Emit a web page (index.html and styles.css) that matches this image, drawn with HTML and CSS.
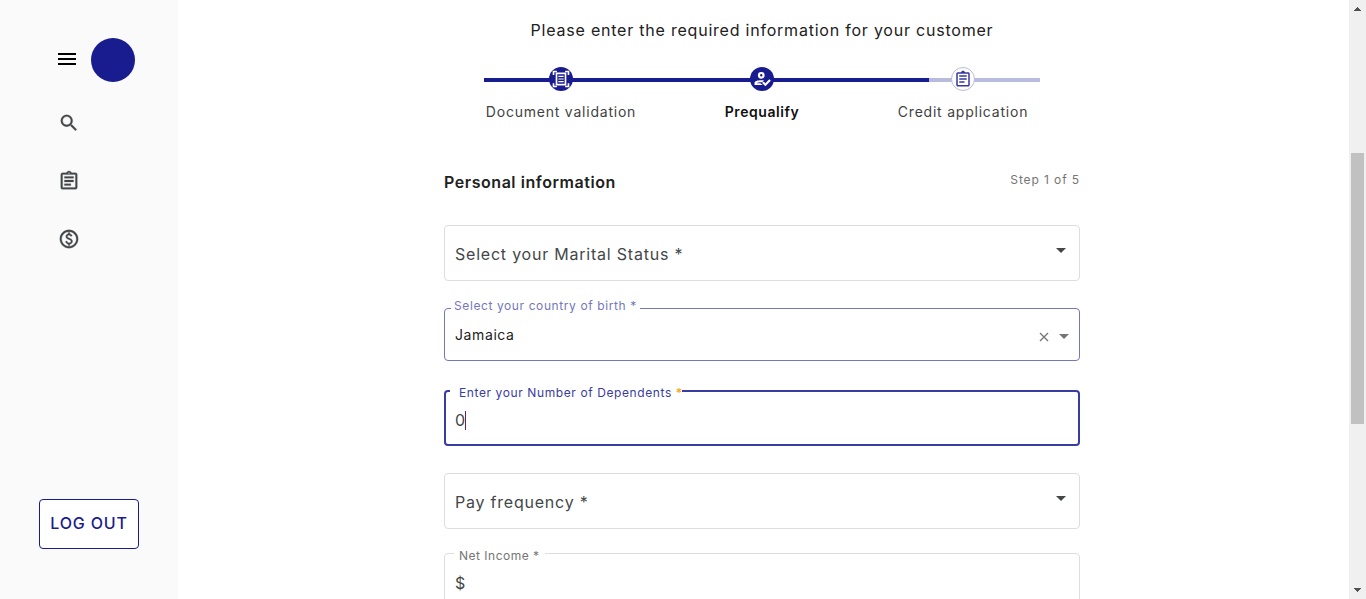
FILE: index.html
```html
<!DOCTYPE html>
<html lang="en">
<head>
<meta charset="utf-8">
<title>Prequalify</title>
<link rel="stylesheet" href="styles.css">
</head>
<body>
<div class="app">
  <aside class="sidebar">
    <div class="brand">
      <svg class="burger" viewBox="0 0 18 12"><path d="M0 0h18v2H0zM0 5h18v2H0zM0 10h18v2H0z"/></svg>
      <span class="logo"></span>
    </div>
    <nav class="nav">
      <svg class="icon" viewBox="0 0 24 24"><path d="M15.5 14h-.79l-.28-.27A6.47 6.47 0 0 0 16 9.5 6.5 6.5 0 1 0 9.5 16c1.61 0 3.09-.59 4.23-1.57l.27.28v.79l5 4.99L20.49 19l-4.99-5zm-6 0C7.01 14 5 11.99 5 9.5S7.01 5 9.5 5 14 7.01 14 9.5 11.99 14 9.5 14z"/></svg>
      <svg class="icon" viewBox="0 0 24 24"><path d="M7 15h7v2H7zm0-4h10v2H7zm0-4h10v2H7zm12-4h-4.18C14.4 1.84 13.3 1 12 1s-2.4.84-2.82 2H5a2 2 0 0 0-2 2v14c0 1.1.9 2 2 2h14c1.1 0 2-.9 2-2V5c0-1.1-.9-2-2-2zm-7-.25c.41 0 .75.34.75.75s-.34.75-.75.75-.75-.34-.75-.75.34-.75.75-.75zM19 19H5V5h14v14z"/></svg>
      <svg class="icon" viewBox="0 0 24 24"><path d="M12 2C6.48 2 2 6.48 2 12s4.48 10 10 10 10-4.48 10-10S17.52 2 12 2zm0 18c-4.41 0-8-3.59-8-8s3.59-8 8-8 8 3.59 8 8-3.59 8-8 8zm.89-8.9c-1.78-.59-2.64-.96-2.64-1.9 0-1.02 1.11-1.39 1.81-1.39 1.31 0 1.79.99 1.9 1.34l1.58-.67c-.15-.44-.82-1.91-2.66-2.23V5h-1.75v1.26c-2.6.56-2.62 2.85-2.62 2.96 0 2.27 2.25 2.91 3.35 3.31 1.58.56 2.28 1.07 2.28 2.03 0 1.13-1.05 1.61-1.98 1.61-1.82 0-2.34-1.87-2.4-2.09l-1.66.67c.63 2.19 2.28 2.78 3.02 2.96V19h1.75v-1.24c.52-.09 3.02-.59 3.02-3.22.01-1.39-.6-2.61-3-3.44z"/></svg>
    </nav>
    <button class="logout">LOG OUT</button>
  </aside>

  <main class="content">
    <p class="intro">Please enter the required information for your customer</p>
    <div class="stepper">
      <div class="track"><div class="progress"></div></div>
      <div class="step">
        <span class="dot"><svg viewBox="0 0 24 24"><g fill="none" stroke="currentColor" stroke-width="2.2"><path d="M2 6.500V2h4.500M17.500 2H22v4.500M22 17.500V22h-4.500M6.500 22H2v-4.500"/><path d="M6 4.500h12v15H6z"/><path stroke-width="1.500" d="M8.500 8.500h7M8.500 12h7M8.500 15.500h7"/></g></svg></span>
        <span class="step-label">Document validation</span>
      </div>
      <div class="step">
        <span class="dot"><svg viewBox="0 0 24 24"><path fill-rule="evenodd" d="M11 2.500a4.500 4.500 0 1 0 0 9 4.500 4.500 0 0 0 0-9zm0 2.900a1.600 1.600 0 1 1 0 3.200 1.600 1.600 0 0 1 0-3.200zM2 20v-2.500c0-3 4-4 9-4 1.300 0 2.500.1 3.600.3l-2.200 2.500c-3.600-.1-6.400.4-7.400 1.200h5l3 2.500zM16.500 21.500l-4.300-4.200 2-2 2.300 2.200 5.200-5.200 2 2z"/></svg></span>
        <span class="step-label current">Prequalify</span>
      </div>
      <div class="step">
        <span class="dot pending"><svg viewBox="0 0 24 24"><path d="M7 15h7v2H7zm0-4h10v2H7zm0-4h10v2H7zm12-4h-4.180C14.400 1.840 13.300 1 12 1s-2.400.84-2.820 2H5a2 2 0 0 0-2 2v15c0 1.100.9 2 2 2h14c1.100 0 2-.9 2-2V5c0-1.100-.9-2-2-2zM19 20H5V5h14v15z"/></svg></span>
        <span class="step-label">Credit application</span>
      </div>
    </div>

    <form class="form">
      <header class="form-head">
        <h2 class="title">Personal information</h2>
        <span class="count">Step 1 of 5</span>
      </header>
      <div class="field marital">
        <span class="placeholder">Select your Marital Status *</span>
        <svg class="caret" viewBox="0 0 10 5"><path d="M0 0h10L5 5z"/></svg>
      </div>
      <div class="field country">
        <span class="float">Select your country of birth *</span>
        <span class="value">Jamaica</span>
        <svg class="clear" viewBox="0 0 8 8"><path d="M0 0l8 8M8 0L0 8"/></svg>
        <svg class="caret" viewBox="0 0 10 5"><path d="M0 0h10L5 5z"/></svg>
      </div>
      <div class="field dependents">
        <span class="float">Enter your Number of Dependents <b class="required">*</b></span>
        <span class="typed">0</span><span class="cursor"></span>
      </div>
      <div class="field frequency">
        <span class="placeholder">Pay frequency *</span>
        <svg class="caret" viewBox="0 0 10 5"><path d="M0 0h10L5 5z"/></svg>
      </div>
      <div class="field income">
        <span class="float">Net Income *</span>
        <span class="typed">$</span>
      </div>
    </form>
  </main>

  <div class="scrollbar">
    <svg class="arrow" viewBox="0 0 7 4"><path d="M3 0h1v1h1v1h1v1h1v1H0V3h1V2h1V1h1z"/></svg>
    <div class="thumb"></div>
    <svg class="arrow down" viewBox="0 0 7 4"><path d="M0 0h7v1H6v1H5v1H4v1H3V3H2V2H1V1H0z"/></svg>
  </div>
</div>
</body>
</html>
```
FILE: styles.css
```css
* { box-sizing: border-box; }
body { margin: 0; font-family: Inter, "Liberation Sans", sans-serif; letter-spacing: 0.78px; color: #212121; background: #fff; }
svg { display: block; flex: none; }
.app { display: flex; height: 599px; overflow: hidden; }
.sidebar { width: 178px; flex: none; background: #fafafa; display: flex; flex-direction: column; }
.brand { display: flex; align-items: center; gap: 15px; padding: 38px 0 0 58px; }
.burger { width: 18px; height: 12px; margin-top: -2px; }
.logo { width: 44px; height: 44px; border-radius: 50%; background: #181c8f; }
.nav { display: flex; flex-direction: column; gap: 36px; padding: 30px 0 0 58px; }
.icon { width: 22px; height: 22px; fill: #434749; stroke: #434749; stroke-width: 0.3; }
.logout { width: 100px; height: 50px; margin: auto 0 50px 39px; padding: 0 0 2px; border: 1px solid #181c8f; border-radius: 4px; background: #fff; color: #181c8f; font: 500 16px Inter, "Liberation Sans", sans-serif; letter-spacing: 0.85px; }

.content { flex: 1; min-width: 0; padding: 19px 0 0 266px; }
.intro { width: 636px; margin: 0; font-size: 16px; line-height: 22px; text-align: center; }
.stepper { position: relative; display: flex; justify-content: space-between; width: 556px; margin: 26px 0 0 40px; }
.track { position: absolute; left: 0; right: 0; top: 11px; height: 4px; background: #b9bbdd; }
.progress { width: 80%; height: 4px; background: #181c8f; }
.step { position: relative; width: 154px; display: flex; flex-direction: column; align-items: center; }
.dot { width: 24px; height: 24px; border-radius: 50%; background: #181c8f; color: #fff; display: flex; align-items: center; justify-content: center; }
.dot svg { width: 18px; height: 18px; fill: currentColor; }
.dot.pending { background: #fff; border: 1px solid #b9bbdd; color: #3639a0; }
.step-label { margin-top: 12px; font-size: 14px; line-height: 18px; color: #424242; white-space: nowrap; }
.current { font-weight: 600; letter-spacing: 0.55px; color: #111; }

.form { width: 636px; margin-top: 50px; }
.form-head { display: flex; justify-content: space-between; height: 54px; }
.title { margin: 0; font-size: 16px; line-height: 22px; font-weight: 600; letter-spacing: 0.55px; }
.count { margin-top: 1px; font-size: 12px; line-height: 16px; letter-spacing: 0.9px; color: #757575; }
.field { position: relative; display: flex; align-items: center; height: 56px; padding: 0 9px 0 10px; border: 1px solid #dedede; border-radius: 4px; color: #434749; }
.placeholder { flex: 1; font-size: 16px; line-height: 22px; padding-top: 1px; }
.caret { width: 10px; height: 5px; fill: #434749; margin: -6px 4px 0 0; }
.float { position: absolute; top: -10px; padding: 0 4px; font-size: 12px; line-height: 14px; letter-spacing: 0.6px; background: #fff; white-space: nowrap; }
.country { height: 53px; margin-top: 27px; border-color: #7477bc; }
.country .float { left: 6px; width: 189px; padding-left: 3px; color: #7477bc; }
.value { flex: 1; font-size: 14px; line-height: 18px; letter-spacing: 0.6px; color: #212121; }
.clear { width: 8px; height: 8px; stroke: #757575; stroke-width: 1.3; margin: 5px 11px 0 0; overflow: visible; }
.country .caret { fill: #757575; margin: 3px 1px 0 0; }
.dependents { height: 56px; margin-top: 29px; padding-left: 9px; border: 2px solid #393ca1; }
.dependents .float { left: 4px; top: -6px; width: 232px; padding-left: 9px; color: #393ca1; }
.required { color: #f9a51a; font-weight: 600; }
.typed { font-size: 16px; line-height: 20px; padding-top: 3px; }
.cursor { width: 1px; height: 19px; margin: 5px 0 0 -1px; background: #6e214f; }
.frequency { margin-top: 27px; }
.income { margin-top: 24px; }
.income .float { left: 9px; top: -5px; width: 91px; padding-left: 5px; letter-spacing: 0.5px; color: #757575; }

.scrollbar { width: 17px; flex: none; background: #f0f0f0; display: flex; flex-direction: column; align-items: center; padding: 7px 0; }
.arrow { width: 7px; height: 4px; fill: #505050; }
.arrow.down { margin-top: auto; }
.thumb { width: 13px; height: 271px; margin-top: 142px; background: #c1c1c1; }
```
